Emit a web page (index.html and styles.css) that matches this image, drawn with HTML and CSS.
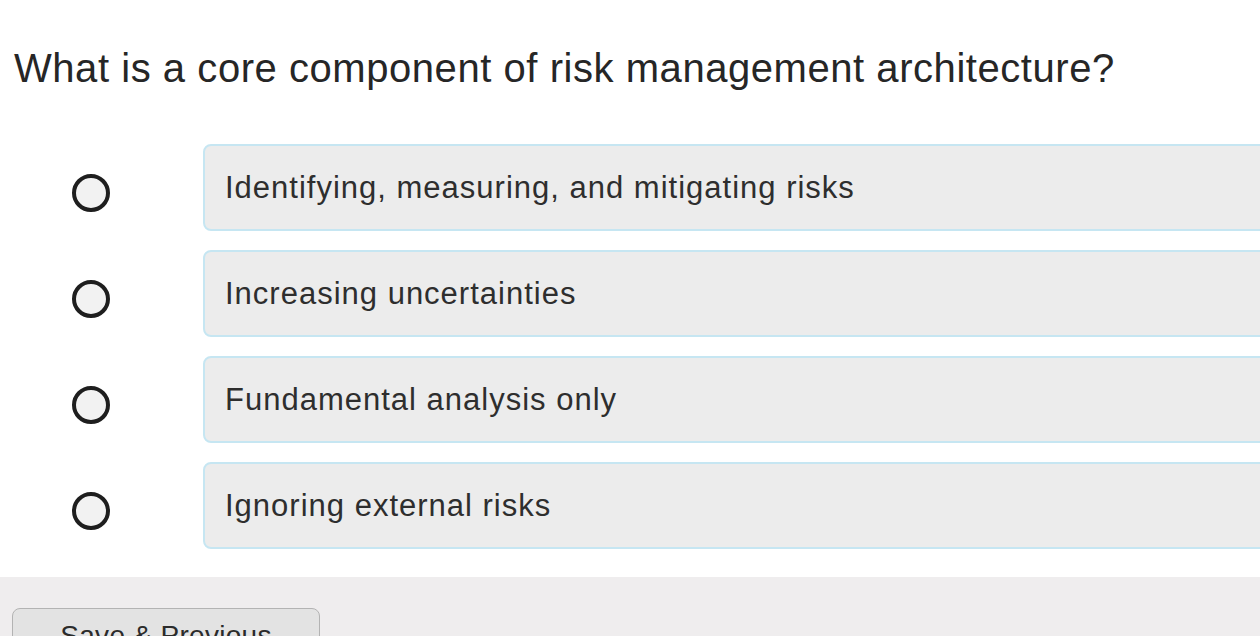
FILE: index.html
```html
<!DOCTYPE html>
<html lang="en">
<head>
<meta charset="UTF-8">
<title>Quiz</title>
<link rel="stylesheet" href="styles.css">
</head>
<body>
<div class="question">
    <h2 class="question-text">What is a core component of risk management architecture?</h2>
    <div class="options">
        <label class="option">
            <span class="radio-cell"><input type="radio" name="answer"><span class="radio"></span></span>
            <span class="option-box">Identifying, measuring, and mitigating risks</span>
        </label>
        <label class="option">
            <span class="radio-cell"><input type="radio" name="answer"><span class="radio"></span></span>
            <span class="option-box">Increasing uncertainties</span>
        </label>
        <label class="option">
            <span class="radio-cell"><input type="radio" name="answer"><span class="radio"></span></span>
            <span class="option-box">Fundamental analysis only</span>
        </label>
        <label class="option">
            <span class="radio-cell"><input type="radio" name="answer"><span class="radio"></span></span>
            <span class="option-box">Ignoring external risks</span>
        </label>
    </div>
</div>
<div class="footer">
    <button class="nav-button">Save &amp; Previous</button>
</div>
</body>
</html>
```

FILE: styles.css
```css
body {
    margin: 0;
    background-color: #fff;
    font-family: "Liberation Sans", Arial, Helvetica, sans-serif;
    color: #2b2b2b;
    overflow: hidden;
}

.question {
    padding: 0 0 28px 14px;
}

.question-text {
    margin: 0;
    padding-top: 46px;
    font-size: 40px;
    font-weight: normal;
    letter-spacing: 0.55px;
    line-height: 44px;
    color: #262626;
}

.options {
    display: flex;
    flex-direction: column;
    gap: 19px;
    margin-top: 54px;
    margin-right: -40px;
}

.option {
    display: flex;
    align-items: center;
    cursor: pointer;
}

.radio-cell {
    width: 189px;
    display: flex;
    align-items: center;
    padding: 10px 0 0 58px;
    box-sizing: border-box;
}

.radio-cell input {
    display: none;
}

.radio {
    width: 38px;
    height: 38px;
    border: 4px solid #1e1e1e;
    border-radius: 50%;
    background-color: #f2f2f2;
    box-sizing: border-box;
}

.option-box {
    flex: 1;
    height: 87px;
    display: flex;
    align-items: center;
    padding: 0 0 0 20px;
    box-sizing: border-box;
    background-color: #ececec;
    border: 2px solid #c6e6f2;
    border-radius: 8px;
    font-size: 31px;
    letter-spacing: 1px;
    color: #2e2e2e;
}

.footer {
    background-color: #efedee;
    padding: 31px 0 0 12px;
    height: 100px;
}

.nav-button {
    width: 308px;
    height: 60px;
    border: 1px solid #b3b3b3;
    border-radius: 8px;
    background-color: #e3e3e3;
    font-family: "Liberation Sans", Arial, sans-serif;
    font-size: 28px;
    letter-spacing: 0.3px;
    color: #2b2b2b;
    padding: 0 0 4px;
    line-height: 1;
    display: block;
}
```
